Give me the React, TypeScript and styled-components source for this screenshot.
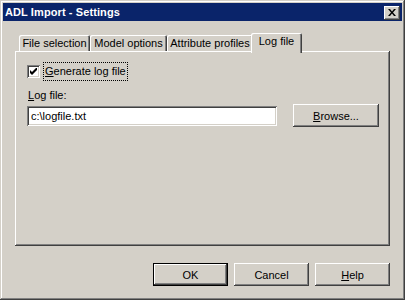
import React from "react"
import styled, { createGlobalStyle } from "styled-components"

const FACE = "#d4d0c8"
const SHADOW = "#808080"
const DARK = "#404040"

const raised = `
  box-shadow: inset -1px -1px ${DARK}, inset 1px 1px #fff,
    inset -2px -2px ${SHADOW}, inset 2px 2px ${FACE};
`

const sunken = `
  box-shadow: inset 1px 1px ${SHADOW}, inset -1px -1px #fff,
    inset 2px 2px ${DARK}, inset -2px -2px ${FACE};
`

const GlobalStyle = createGlobalStyle`
  html, body {
    margin: 0;
    padding: 0;
    background: ${FACE};
  }
  body {
    font-family: "Liberation Sans", Arial, sans-serif;
    font-size: 11px;
    color: #000;
  }
`

const Window = styled.div`
  width: 405px;
  height: 300px;
  box-sizing: border-box;
  padding: 3px;
  background: ${FACE};
  box-shadow: inset -1px -1px ${DARK}, inset 1px 1px ${FACE},
    inset -2px -2px ${SHADOW}, inset 2px 2px #fff;
  display: flex;
  flex-direction: column;
`

const TitleBar = styled.div`
  height: 18px;
  background: #0a246a;
  display: flex;
  align-items: center;
  justify-content: space-between;
  padding: 0 2px 0 2px;
`

const Title = styled.span`
  color: #fff;
  font-weight: bold;
  font-size: 11px;
  letter-spacing: 0.1px;
`

const CloseButton = styled.div`
  width: 16px;
  height: 14px;
  background: ${FACE};
  ${raised}
  display: flex;
  align-items: center;
  justify-content: center;
  margin-top: 1px;
`

const Body = styled.div`
  flex: 1;
  display: flex;
  flex-direction: column;
  padding: 12px 12px 0 12px;
`

const TabStrip = styled.div`
  height: 18px;
  display: flex;
  align-items: flex-end;
  padding-left: 4px;
`

const Tab = styled.div<{ $w: number; $active?: boolean }>`
  position: relative;
  box-sizing: border-box;
  width: ${(p) => p.$w}px;
  height: ${(p) => (p.$active ? 20 : 16)}px;
  margin: 0 ${(p) => (p.$active ? -2 : 0)}px ${(p) => (p.$active ? -2 : 0)}px;
  z-index: ${(p) => (p.$active ? 2 : 0)};
  background: ${FACE};
  border-radius: 2px 2px 0 0;
  box-shadow: inset 1px 1px #fff, inset -1px 0 ${DARK}, inset -2px 0 ${SHADOW};
  display: flex;
  justify-content: center;
  padding-top: ${(p) => (p.$active ? 2 : 2)}px;
  white-space: nowrap;
`

const Panel = styled.div`
  position: relative;
  z-index: 1;
  box-sizing: border-box;
  height: 195px;
  padding: 12px 10px 0 12px;
  ${raised}
`

const CheckRow = styled.div`
  display: flex;
  align-items: center;
  height: 17px;
  gap: 4px;
`

const CheckBox = styled.div`
  width: 13px;
  height: 13px;
  box-sizing: border-box;
  background: #fff;
  ${sunken}
  display: flex;
  align-items: center;
  justify-content: center;
`

const FocusLabel = styled.span`
  outline: 1px dotted #000;
  outline-offset: 0;
  padding: 2px 1px 2px 1px;
  line-height: 13px;
`

const FieldLabel = styled.div`
  margin-top: 8px;
  height: 14px;
  line-height: 14px;
  padding-left: 1px;
`

const FieldRow = styled.div`
  margin-top: 2px;
  display: flex;
  align-items: center;
  gap: 16px;
`

const TextInput = styled.div`
  width: 250px;
  height: 20px;
  box-sizing: border-box;
  background: #fff;
  ${sunken}
  padding: 3px 4px;
  line-height: 14px;
`

const Button = styled.div<{ $w: number; $default?: boolean }>`
  width: ${(p) => p.$w}px;
  height: 23px;
  box-sizing: border-box;
  background: ${FACE};
  display: flex;
  align-items: center;
  justify-content: center;
  ${(p) =>
    p.$default
      ? `box-shadow: inset 0 0 0 1px #000, inset -2px -2px ${DARK}, inset 2px 2px #fff,
          inset -3px -3px ${SHADOW}, inset 3px 3px ${FACE};`
      : raised}
`

const ButtonRow = styled.div`
  margin-top: 17px;
  display: flex;
  justify-content: flex-end;
  gap: 6px;
`

const Key = styled.span`
  text-decoration: underline;
`

const CloseIcon = () => (
  <svg width="8" height="7" viewBox="0 0 8 7">
    <path d="M0 0h2l2 2.5L6 0h2L5 3.5 8 7H6L4 4.5 2 7H0l3-3.5z" fill="#000" />
  </svg>
)

const CheckIcon = () => (
  <svg width="7" height="7" viewBox="0 0 7 7">
    <path d="M0 2v3l2 2 5-5V-1L2 4z" fill="#000" />
  </svg>
)

export default function App() {
  const tabs = [
    { label: "File selection", w: 71 },
    { label: "Model options", w: 77 },
    { label: "Attribute profiles", w: 86 },
    { label: "Log file", w: 51, active: true },
  ]

  return (
    <>
      <GlobalStyle />
      <Window>
        <TitleBar>
          <Title>ADL Import - Settings</Title>
          <CloseButton>
            <CloseIcon />
          </CloseButton>
        </TitleBar>
        <Body>
          <TabStrip>
            {tabs.map((t) => (
              <Tab key={t.label} $w={t.w} $active={t.active}>
                {t.label}
              </Tab>
            ))}
          </TabStrip>
          <Panel>
            <CheckRow>
              <CheckBox>
                <CheckIcon />
              </CheckBox>
              <FocusLabel>
                <Key>G</Key>enerate log file
              </FocusLabel>
            </CheckRow>
            <FieldLabel>
              <Key>L</Key>og file:
            </FieldLabel>
            <FieldRow>
              <TextInput>c:\logfile.txt</TextInput>
              <Button $w={86}>
                <span>
                  <Key>B</Key>rowse...
                </span>
              </Button>
            </FieldRow>
          </Panel>
          <ButtonRow>
            <Button $w={75} $default>
              OK
            </Button>
            <Button $w={75}>Cancel</Button>
            <Button $w={75}>
              <span>
                <Key>H</Key>elp
              </span>
            </Button>
          </ButtonRow>
        </Body>
      </Window>
    </>
  )
}
